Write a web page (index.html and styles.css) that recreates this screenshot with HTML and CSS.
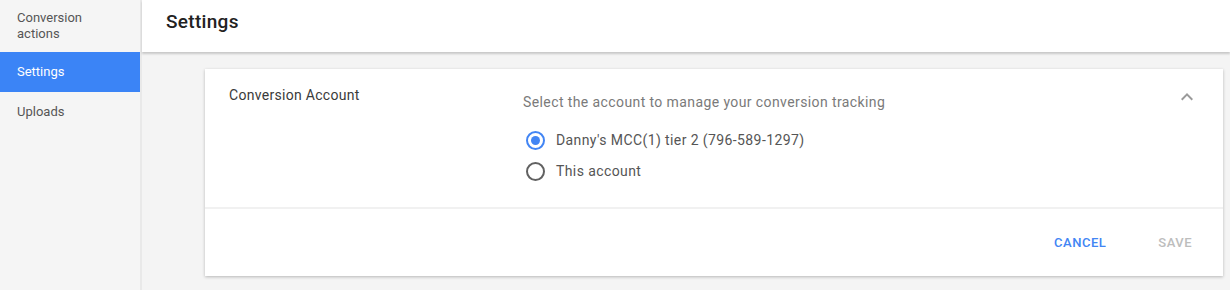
FILE: index.html
```html
<!DOCTYPE html>
<html lang="en">
<head>
    <meta charset="UTF-8">
    <title>Settings</title>
    <link rel="stylesheet" href="styles.css">
</head>
<body>
    <aside class="sidebar">
        <a class="nav-item">Conversion<br>actions</a>
        <a class="nav-item active">Settings</a>
        <a class="nav-item">Uploads</a>
    </aside>

    <main class="main">
        <header class="header">Settings</header>

        <div class="content">
            <section class="card">
                <div class="card-body">
                    <div class="card-label">Conversion Account</div>
                    <div class="card-fields">
                        <div class="hint">Select the account to manage your conversion tracking</div>
                        <label class="radio-row">
                            <span class="radio checked"></span>
                            Danny's MCC(1) tier 2 (796-589-1297)
                        </label>
                        <label class="radio-row">
                            <span class="radio"></span>
                            This account
                        </label>
                    </div>
                    <svg class="chevron" width="24" height="24" viewBox="0 0 24 24">
                        <path d="M7.41 15.41L12 10.83l4.59 4.58L18 14l-6-6-6 6z" fill="#9a9a9a"/>
                    </svg>
                </div>
                <div class="card-footer">
                    <button class="btn btn-primary">Cancel</button>
                    <button class="btn btn-disabled">Save</button>
                </div>
            </section>
        </div>
    </main>
</body>
</html>
```

FILE: styles.css
```css
* {
    margin: 0;
    padding: 0;
    box-sizing: border-box;
}

body {
    font-family: Roboto, "Liberation Sans", sans-serif;
    display: flex;
    height: 290px;
    overflow: hidden;
    background: #f4f4f4;
    color: #333;
}

.sidebar {
    width: 142px;
    flex-shrink: 0;
    background: #f5f5f5;
    border-right: 2px solid #e9e9e9;
    display: flex;
    flex-direction: column;
}

.nav-item {
    display: block;
    font-size: 13px;
    line-height: 16px;
    color: #555;
    padding: 12px 17px;
}

.nav-item:first-child {
    padding: 10px 17px;
}

.nav-item.active {
    background: #3b84f6;
    color: #fff;
}

.main {
    flex: 1;
    display: flex;
    flex-direction: column;
}

.header {
    height: 52px;
    background: #fff;
    padding: 10px 24px;
    font-size: 19px;
    line-height: 24px;
    font-weight: 500;
    letter-spacing: 0.3px;
    color: #222;
    box-shadow: 0 2px 2px rgba(0, 0, 0, 0.18);
    position: relative;
}

.content {
    padding: 17px 7px 0 63px;
}

.card {
    background: #fff;
    box-shadow: 0 1px 3px rgba(0, 0, 0, 0.25);
}

.card-body {
    display: flex;
    height: 138px;
    padding: 0 24px 0 24px;
}

.card-label {
    width: 294px;
    padding-top: 16px;
    font-size: 14px;
    line-height: 20px;
    letter-spacing: 0.3px;
    color: #3a3a3a;
}

.card-fields {
    flex: 1;
    padding-top: 23px;
}

.hint {
    font-size: 14px;
    line-height: 20px;
    letter-spacing: 0.4px;
    color: #7a7a7a;
    margin-bottom: 16px;
}

.radio-row {
    display: flex;
    align-items: center;
    gap: 11px;
    height: 24px;
    margin-bottom: 7px;
    font-size: 14px;
    letter-spacing: 0.4px;
    color: #555;
    padding-left: 3px;
}

.radio {
    width: 19px;
    height: 19px;
    border: 2px solid #616161;
    border-radius: 50%;
    position: relative;
}

.radio.checked {
    border-color: #4285f4;
}

.radio.checked::after {
    content: "";
    position: absolute;
    inset: 3px;
    border-radius: 50%;
    background: #4285f4;
}

.chevron {
    margin-top: 16px;
}

.card-footer {
    border-top: 2px solid #f1f1f1;
    height: 69px;
    display: flex;
    justify-content: flex-end;
    align-items: center;
    gap: 52px;
    padding: 0 31px 0 0;
}

.btn {
    border: none;
    background: none;
    font-family: inherit;
    font-size: 13px;
    font-weight: 500;
    text-transform: uppercase;
    letter-spacing: 0.5px;
}

.btn-primary {
    color: #4285f4;
}

.btn-disabled {
    color: #bdbdbd;
}
```
